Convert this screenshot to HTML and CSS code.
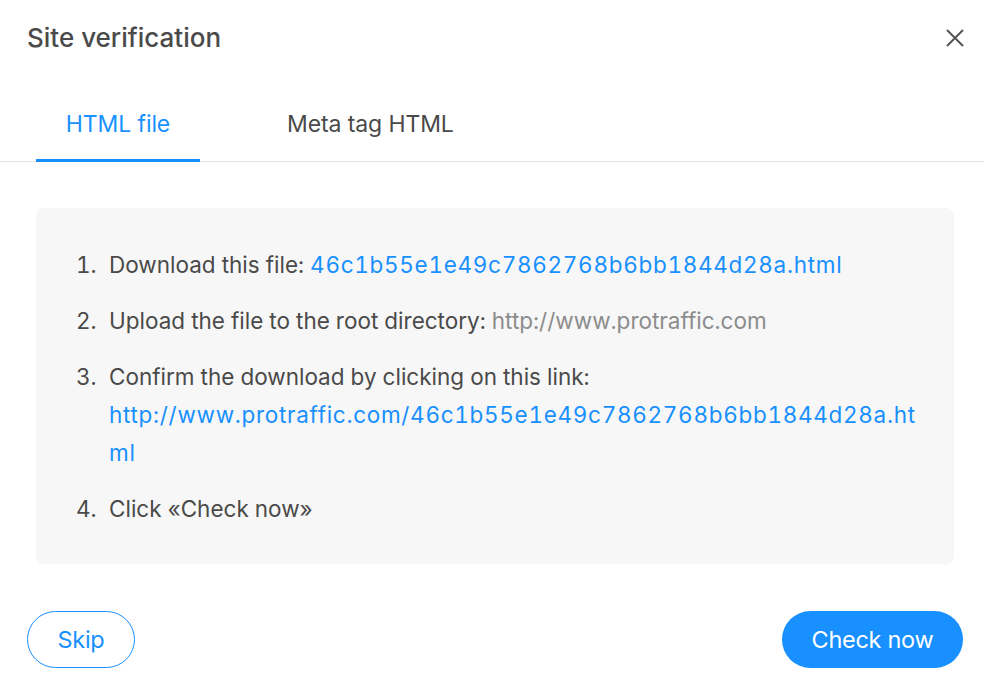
FILE: index.html
```html
<!DOCTYPE html>
<html lang="en">
<head>
<meta charset="utf-8">
<title>Site verification</title>
<link rel="stylesheet" href="styles.css">
</head>
<body>
<div class="modal">
  <header class="modal-header">
    <h1 class="modal-title">Site verification</h1>
    <button class="close" aria-label="Close">
      <svg width="20" height="20" viewBox="0 0 20 20"><path d="M2 2 L18 18 M18 2 L2 18" stroke="#555" stroke-width="2" fill="none"/></svg>
    </button>
  </header>
  <nav class="tabs">
    <div class="tab active">HTML file</div>
    <div class="tab">Meta tag HTML</div>
  </nav>
  <div class="content">
    <ol class="steps">
      <li><span class="num">1.</span><span class="txt">Download this file: <a class="link" href="#">46c1b55e1e49c7862768b6bb1844d28a.html</a></span></li>
      <li><span class="num">2.</span><span class="txt">Upload the file to the root directory: <span class="muted">http://www.protraffic.com</span></span></li>
      <li><span class="num">3.</span><span class="txt">Confirm the download by clicking on this link: <a class="link break" href="#">http://www.protraffic.com/46c1b55e1e49c7862768b6bb1844d28a.html</a></span></li>
      <li><span class="num">4.</span><span class="txt">Click «Check now»</span></li>
    </ol>
  </div>
  <footer class="actions">
    <button class="btn btn-outline">Skip</button>
    <button class="btn btn-primary">Check now</button>
  </footer>
</div>
</body>
</html>
```
FILE: styles.css
```css
* { box-sizing: border-box; }
html, body { margin: 0; padding: 0; background: #fff; }
body {
  font-family: Inter, "Noto Sans", "Liberation Sans", sans-serif;
  color: #4a4a4a;
  width: 984px;
  height: 682px;
  overflow: hidden;
}
.modal { display: flex; flex-direction: column; }
.modal-header {
  display: flex;
  justify-content: space-between;
  align-items: center;
  padding: 19px 19px 0 27px;
  height: 56px;
}
.modal-title {
  margin: 0;
  font-size: 26px;
  font-weight: 500;
  color: #4a4a4a;
  letter-spacing: 0;
}
.close {
  border: 0;
  background: none;
  padding: 0;
  width: 20px;
  height: 20px;
  display: flex;
  cursor: pointer;
}
.tabs {
  display: flex;
  margin-top: 39px;
  padding-left: 36px;
  border-bottom: 1px solid #e2e2e2;
  height: 67px;
  align-items: stretch;
}
.tab {
  font-size: 23px;
  color: #4a4a4a;
  padding: 14px 0 0;
  height: 66px;
  line-height: 30px;
  letter-spacing: -0.1px;
}
.tab.active {
  color: #1890ff;
  width: 164px;
  text-align: center;
  border-bottom: 3px solid #1890ff;
  margin-bottom: -1px;
  height: 67px;
}
.tab + .tab { margin-left: 87px; }
.content {
  margin: 46px 30px 0 36px;
  background: #f7f7f7;
  border-radius: 8px;
  padding: 38px 36px 36px 40px;
}
.steps {
  list-style: none;
  margin: 0;
  padding: 0;
  display: flex;
  flex-direction: column;
  gap: 18px;
}
.steps li {
  display: flex;
  font-size: 22.5px;
  line-height: 38px;
  letter-spacing: 0;
  font-variant-numeric: tabular-nums;
}
.num { width: 33px; flex: none; }
.txt { flex: 1; min-width: 0; }
.link { color: #1890ff; text-decoration: none; letter-spacing: 0.7px; }
.break { overflow-wrap: break-word; }
.muted { color: #8c8c8c; }
.actions {
  display: flex;
  justify-content: space-between;
  padding: 47px 21px 0 27px;
}
.btn {
  font-family: inherit;
  font-size: 23.5px;
  height: 57px;
  border-radius: 29px;
  cursor: pointer;
  letter-spacing: -0.3px;
}
.btn-outline {
  width: 108px;
  background: #fff;
  color: #1890ff;
  border: 1px solid #1890ff;
}
.btn-primary {
  width: 181px;
  background: #1890ff;
  color: #fff;
  border: 0;
}
```
